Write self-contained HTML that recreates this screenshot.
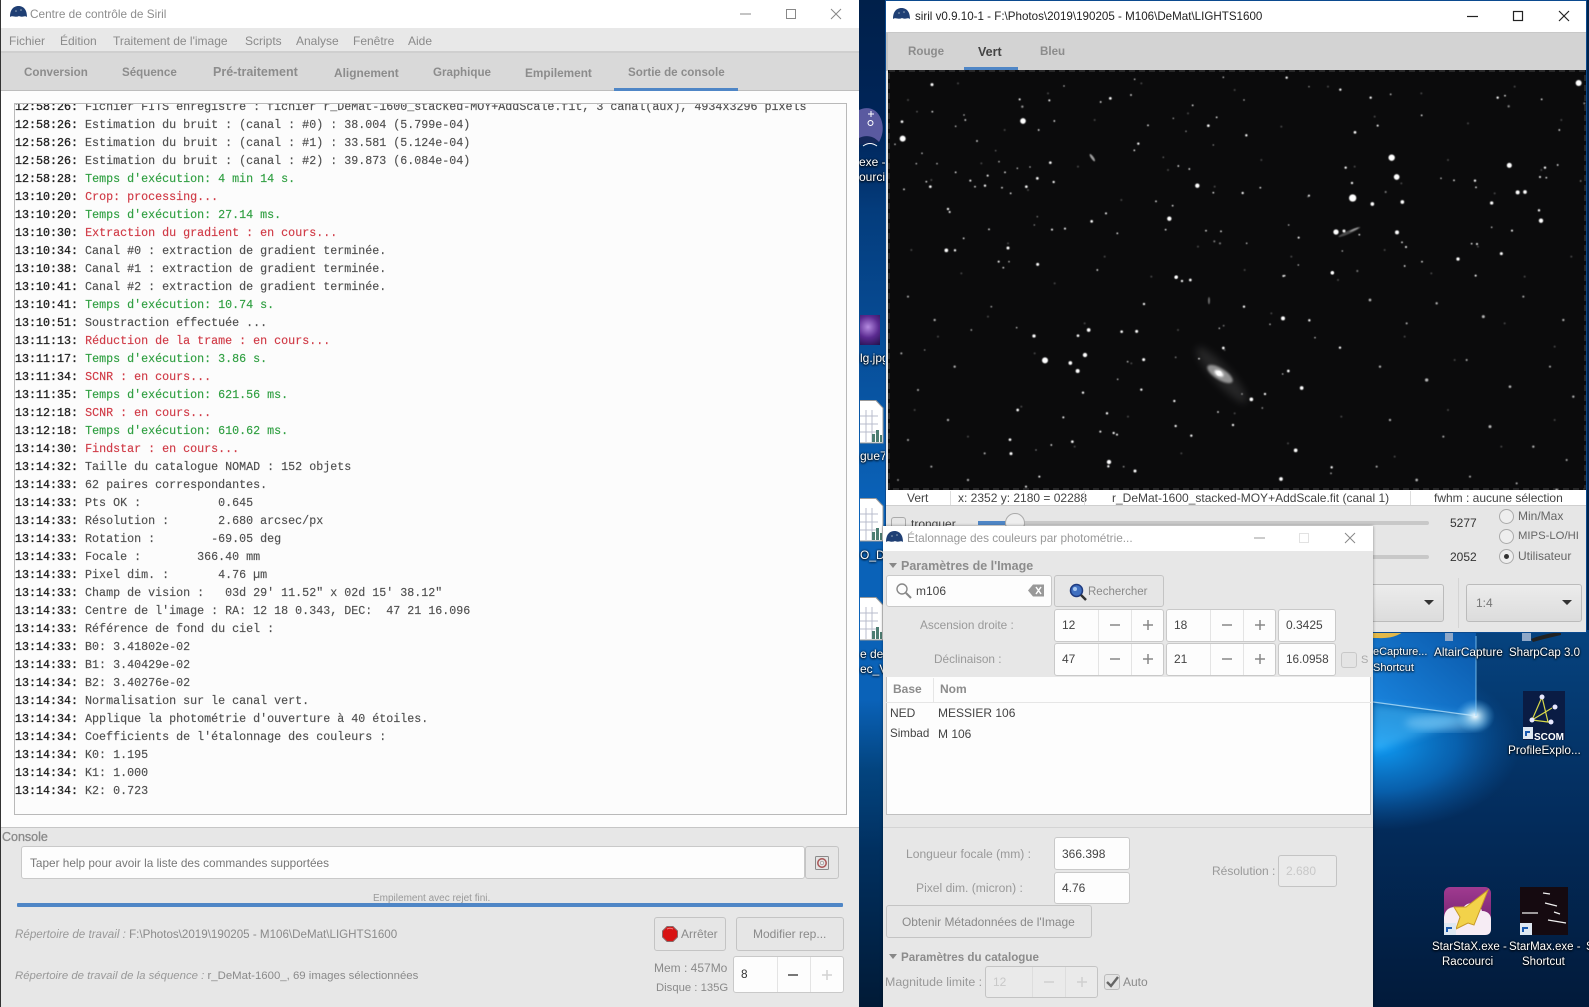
<!DOCTYPE html>
<html lang="fr"><head><meta charset="utf-8"><title>Siril</title>
<style>
html,body{margin:0;padding:0;width:1589px;height:1007px;overflow:hidden;background:#02234a;font-family:"Liberation Sans",sans-serif;font-size:11.8px;color:#8a8a8a}
div,span,svg{position:absolute;box-sizing:border-box}
.t{white-space:nowrap;line-height:16px;height:16px}
.m{font-size:12px}
.b{font-weight:bold;color:#8c8c8c;font-size:11.6px}
.d{color:#fff;text-shadow:0 1px 2px #000,0 0 2px #000;font-size:11.5px;text-align:center}
.entry{background:#fdfdfd;border:1px solid #c9c9c9;border-radius:3px}
.btn{background:#e6e6e6;border:1px solid #c4c4c4;border-radius:3px}
.sep{background:#e4e4e4;width:1px}
#log{left:15px;top:104px;width:830px;height:710px;overflow:hidden;font-family:"Liberation Mono","DejaVu Sans Mono",monospace;font-size:11.68px;color:#4f4f4f}
#log div{left:0;white-space:pre;line-height:18px;height:18px;-webkit-text-stroke:.15px}
#log b{font-weight:normal;color:#222;-webkit-text-stroke:.3px #222}
#log .g{color:#2f9f41}#log .r{color:#d03a46}
</style></head><body>

<!-- desktop strip -->
<div style="left:859px;top:0;width:26px;height:1007px;background:linear-gradient(180deg,#00204a 0,#00255a 130px,#043c7c 210px,#0a62b8 500px,#0a62b8 700px,#03447f 770px,#013060 850px,#011a36 1007px)"></div>
<svg style="left:859px;top:105px" width="26" height="50" viewBox="0 0 26 50"><path d="M0 5C8 1 18 3 22 14C25 22 24 30 20 37C14 32 6 33 0 36Z" fill="#5a5aa0"/><path d="M0 33C6 30 14 30 20 37C14 40 6 38 0 40Z" fill="#14285a"/><path d="M9 9h6M12 6v6M9 18a2.500 2.500 0 1 0 5 0a2.500 2.500 0 1 0-5 0M4 41q7-5 14 0" stroke="#fff" fill="none"/></svg>
<span class="t d" style="left:859px;top:154px;font-size:12px">exe -</span>
<span class="t d" style="left:859px;top:169px;font-size:12px">ourci</span>
<div style="left:860px;top:315px;width:20px;height:30px;background:radial-gradient(circle at 40% 40%,#b48ae0,#5a2a90 50%,#20104a)"></div>
<span class="t d" style="left:860px;top:350px;font-size:12px">lg.jpg</span>
<svg style="left:860px;top:400px" width="24" height="44"><path d="M0 .5H16L23 8V43H0" fill="#fff" stroke="#999"/><path d="M0 16H18M0 24H18M0 32H18M6 10V42M12 10V42" stroke="#b8bccc"/><path d="M12 42V34h3V42M16 42V30h3V42M20 42V35h2V42" fill="#4d7d72"/></svg>
<span class="t d" style="left:860px;top:448px;font-size:12px">gue7</span>
<svg style="left:860px;top:498px" width="24" height="44"><path d="M0 .5H16L23 8V43H0" fill="#fff" stroke="#999"/><path d="M0 16H18M0 24H18M0 32H18M6 10V42M12 10V42" stroke="#b8bccc"/><path d="M12 42V34h3V42M16 42V30h3V42M20 42V35h2V42" fill="#4d7d72"/></svg>
<span class="t d" style="left:860px;top:547px;font-size:12px">O_Dé</span>
<svg style="left:860px;top:597px" width="24" height="44"><path d="M0 .5H16L23 8V43H0" fill="#fff" stroke="#999"/><path d="M0 16H18M0 24H18M0 32H18M6 10V42M12 10V42" stroke="#b8bccc"/><path d="M12 42V34h3V42M16 42V30h3V42M20 42V35h2V42" fill="#4d7d72"/></svg>
<span class="t d" style="left:860px;top:646px;font-size:12px">e de</span>
<span class="t d" style="left:860px;top:661px;font-size:12px">ec_V</span>

<!-- wallpaper right -->
<svg style="left:1373px;top:630px" width="216" height="377" viewBox="1373 630 216 377">
<defs>
<linearGradient id="wb" x1="0" y1="0" x2="0" y2="1"><stop offset="0" stop-color="#06437f"/><stop offset=".5" stop-color="#032c5c"/><stop offset="1" stop-color="#021a3a"/></linearGradient>
<radialGradient id="wg"><stop offset="0" stop-color="#0f9cf5"/><stop offset=".55" stop-color="#0a6fc4" stop-opacity=".75"/><stop offset="1" stop-color="#0a5aa8" stop-opacity="0"/></radialGradient>
<linearGradient id="wp" x1="0" y1="1" x2="1" y2="0"><stop offset="0" stop-color="#1a86e0"/><stop offset="1" stop-color="#0a57a8"/></linearGradient>
<radialGradient id="wf"><stop offset="0" stop-color="#fff"/><stop offset=".3" stop-color="#bfeaff" stop-opacity=".7"/><stop offset="1" stop-color="#4fb4f5" stop-opacity="0"/></radialGradient>
<filter id="wbl"><feGaussianBlur stdDeviation="4"/></filter>
</defs>
<rect x="1373" y="630" width="216" height="377" fill="url(#wb)"/>
<ellipse cx="1380" cy="745" rx="140" ry="85" fill="url(#wg)"/>
<polygon points="1373,630 1476,630 1476,716 1373,702" fill="url(#wp)"/>
<polygon points="1373,704 1476,716 1373,752" fill="#3fb0f2" opacity=".6" filter="url(#wbl)"/>
<ellipse cx="1445" cy="723" rx="40" ry="8" fill="#9adcff" opacity=".45" filter="url(#wbl)"/>
<ellipse cx="1475" cy="716" rx="20" ry="17" fill="url(#wf)"/>
<path d="M1373 702L1476 716" stroke="#c8ecff" stroke-width="1.2" opacity=".7"/>
<path d="M1476 636V716" stroke="#8ed4ff" stroke-width="1.4" opacity=".55"/>
</svg>
<svg style="left:1373px;top:630px" width="210" height="12"><path d="M0 2H30Q20 9 5 8H0Z" fill="#e2b84a"/><rect x="72" y="2" width="8" height="9" fill="#8fa8c8"/><rect x="149" y="2" width="9" height="9" fill="#8fa8c8"/><path d="M158 9Q170 4 188 2V5Q170 9 160 12Z" fill="#222"/></svg>
<span class="t d" style="left:1373px;top:644px;font-size:11px">eCapture...</span>
<span class="t d" style="left:1373px;top:660px;font-size:11px">Shortcut</span>
<span class="t d" style="left:1434px;top:644px;font-size:11.8px">AltairCapture</span>
<span class="t d" style="left:1509px;top:645px">SharpCap 3.0</span>
<svg style="left:1523px;top:691px" width="42" height="49" viewBox="0 0 42 49"><rect width="42" height="49" fill="#0a1c44"/><path d="M19 6L9 29L29 17L9 29L25 31L19 6" fill="none" stroke="#d8d84a" stroke-width="1.2"/><g fill="#e8e8ff"><circle cx="19" cy="6" r="2.5"/><circle cx="9" cy="29" r="2.5"/><circle cx="32" cy="16" r="2.5"/><circle cx="28" cy="31" r="2.5"/></g><rect x="0" y="36" width="10" height="12" fill="#dfe8f2"/><path d="M3 45V41H7" stroke="#1a5ab0" fill="none" stroke-width="2"/></svg>
<span class="t" style="left:1534px;top:730px;color:#fff;font-weight:bold;font-size:10px">SCOM</span>
<span class="t d" style="left:1508px;top:742px;font-size:11.8px">ProfileExplo...</span>
<svg style="left:1444px;top:887px" width="48" height="48" viewBox="0 0 48 48"><defs><linearGradient id="sx" x1="0" y1="0" x2="0" y2="1"><stop offset="0" stop-color="#a03a90"/><stop offset="1" stop-color="#6a1e68"/></linearGradient></defs><rect width="47" height="48" rx="6" fill="url(#sx)"/><path d="M0 32C0 20 10 18 18 22C24 12 36 16 38 24C44 24 47 28 47 32V42Q47 48 41 48H6Q0 48 0 42Z" fill="#f6ecf4"/><path d="M44 3L22 20L10 20L16 30L12 42L24 36L30 38L44 3Z" fill="#f2d24a" stroke="#c89a28"/><rect y="36" width="12" height="12" x="0" fill="#dfe8f2"/><path d="M3 45V41H8" stroke="#1a5ab0" fill="none" stroke-width="2"/></svg>
<span class="t d" style="left:1432px;top:939px">StarStaX.exe -</span>
<span class="t d" style="left:1442px;top:954px">Raccourci</span>
<svg style="left:1520px;top:887px" width="48" height="48" viewBox="0 0 48 48"><rect width="48" height="48" fill="#150a10"/><path d="M2 26H18M25 16L37 19M28 33L46 36M23 6L30 7M34 25L40 27" stroke="#f0f0f0" stroke-width="1.2"/><rect x="0" y="36" width="12" height="12" fill="#dfe8f2"/><path d="M3 45V41H8" stroke="#1a5ab0" fill="none" stroke-width="2"/></svg>
<span class="t d" style="left:1509px;top:939px">StarMax.exe -</span>
<span class="t d" style="left:1522px;top:954px">Shortcut</span>
<span class="t d" style="left:1586px;top:939px">S</span>

<!-- LEFT WINDOW -->
<div style="left:0;top:0;width:859px;height:1007px;background:#e7e7e7;border-left:1px solid #333">
<div style="left:0;top:0;width:858px;height:28px;background:#fff"></div>
<svg style="left:9px;top:6px" width="17" height="13" viewBox="0 0 17 13"><path d="M0 11C0 3 4 0 8.500 0S17 3 17 11C14 9 13 12 9 10C5 12 3 9 0 11Z" fill="#1f3f74"/><circle cx="6" cy="5" r=".8" fill="#9ab"/><circle cx="11" cy="4" r=".8" fill="#9ab"/></svg>
<span class="t" style="left:29px;top:6px;font-size:11.8px;color:#8d8d8d">Centre de contrôle de Siril</span>
<svg style="left:730px;top:6px" width="120" height="16"><path d="M9 8H20" stroke="#888"/><rect x="55.500" y="3.500" width="9" height="9" fill="none" stroke="#888"/><path d="M100 3L110 13M110 3L100 13" stroke="#888"/></svg>
<div style="left:0;top:28px;width:858px;height:25px;background:#e8e8e8;border-bottom:2px solid #cfcfcf"></div>
<span class="t m" style="left:8px;top:33px">Fichier</span>
<span class="t m" style="left:59px;top:33px">Édition</span>
<span class="t m" style="left:112px;top:33px">Traitement de l'image</span>
<span class="t m" style="left:244px;top:33px">Scripts</span>
<span class="t m" style="left:295px;top:33px">Analyse</span>
<span class="t m" style="left:352px;top:33px">Fenêtre</span>
<span class="t m" style="left:407px;top:33px">Aide</span>
<div style="left:0;top:53px;width:858px;height:38px;background:#d9d9d9;border-bottom:1px solid #bdbdbd"></div>
<span class="t b" style="left:23px;top:65px">Conversion</span>
<span class="t b" style="left:121px;top:65px">Séquence</span>
<span class="t b" style="left:212px;top:64px;font-size:12.5px">Pré-traitement</span>
<span class="t b" style="left:333px;top:65px;font-size:11.9px">Alignement</span>
<span class="t b" style="left:432px;top:65px">Graphique</span>
<span class="t b" style="left:524px;top:65px;font-size:11.8px">Empilement</span>
<span class="t b" style="left:627px;top:65px">Sortie de console</span>
<div style="left:613px;top:88px;width:124px;height:3px;background:#4f86c6"></div>
<div style="left:0;top:91px;width:858px;height:737px;background:#fdfdfd;border-bottom:1px solid #c6c6c6"></div>
<div style="left:13px;top:103px;width:833px;height:712px;background:#fcfcfc;border:1px solid #b9b9b9"></div>
</div>
<div id="log">
<div style="top:-6px"><b>12:58:26:</b> Fichier FITS enregistré : fichier r_DeMat-1600_stacked-MOY+AddScale.fit, 3 canal(aux), 4934x3296 pixels</div>
<div style="top:12px"><b>12:58:26:</b> Estimation du bruit : (canal : #0) : 38.004 (5.799e-04)</div>
<div style="top:30px"><b>12:58:26:</b> Estimation du bruit : (canal : #1) : 33.581 (5.124e-04)</div>
<div style="top:48px"><b>12:58:26:</b> Estimation du bruit : (canal : #2) : 39.873 (6.084e-04)</div>
<div style="top:66px"><b>12:58:28:</b> <span class="g" style="position:static">Temps d'exécution: 4 min 14 s.</span></div>
<div style="top:84px"><b>13:10:20:</b> <span class="r" style="position:static">Crop: processing...</span></div>
<div style="top:102px"><b>13:10:20:</b> <span class="g" style="position:static">Temps d'exécution: 27.14 ms.</span></div>
<div style="top:120px"><b>13:10:30:</b> <span class="r" style="position:static">Extraction du gradient : en cours...</span></div>
<div style="top:138px"><b>13:10:34:</b> Canal #0 : extraction de gradient terminée.</div>
<div style="top:156px"><b>13:10:38:</b> Canal #1 : extraction de gradient terminée.</div>
<div style="top:174px"><b>13:10:41:</b> Canal #2 : extraction de gradient terminée.</div>
<div style="top:192px"><b>13:10:41:</b> <span class="g" style="position:static">Temps d'exécution: 10.74 s.</span></div>
<div style="top:210px"><b>13:10:51:</b> Soustraction effectuée ...</div>
<div style="top:228px"><b>13:11:13:</b> <span class="r" style="position:static">Réduction de la trame : en cours...</span></div>
<div style="top:246px"><b>13:11:17:</b> <span class="g" style="position:static">Temps d'exécution: 3.86 s.</span></div>
<div style="top:264px"><b>13:11:34:</b> <span class="r" style="position:static">SCNR : en cours...</span></div>
<div style="top:282px"><b>13:11:35:</b> <span class="g" style="position:static">Temps d'exécution: 621.56 ms.</span></div>
<div style="top:300px"><b>13:12:18:</b> <span class="r" style="position:static">SCNR : en cours...</span></div>
<div style="top:318px"><b>13:12:18:</b> <span class="g" style="position:static">Temps d'exécution: 610.62 ms.</span></div>
<div style="top:336px"><b>13:14:30:</b> <span class="r" style="position:static">Findstar : en cours...</span></div>
<div style="top:354px"><b>13:14:32:</b> Taille du catalogue NOMAD : 152 objets</div>
<div style="top:372px"><b>13:14:33:</b> 62 paires correspondantes.</div>
<div style="top:390px"><b>13:14:33:</b> Pts OK :           0.645</div>
<div style="top:408px"><b>13:14:33:</b> Résolution :       2.680 arcsec/px</div>
<div style="top:426px"><b>13:14:33:</b> Rotation :        -69.05 deg</div>
<div style="top:444px"><b>13:14:33:</b> Focale :        366.40 mm</div>
<div style="top:462px"><b>13:14:33:</b> Pixel dim. :       4.76 µm</div>
<div style="top:480px"><b>13:14:33:</b> Champ de vision :   03d 29' 11.52" x 02d 15' 38.12"</div>
<div style="top:498px"><b>13:14:33:</b> Centre de l'image : RA: 12 18 0.343, DEC:  47 21 16.096</div>
<div style="top:516px"><b>13:14:33:</b> Référence de fond du ciel :</div>
<div style="top:534px"><b>13:14:33:</b> B0: 3.41802e-02</div>
<div style="top:552px"><b>13:14:33:</b> B1: 3.40429e-02</div>
<div style="top:570px"><b>13:14:34:</b> B2: 3.40276e-02</div>
<div style="top:588px"><b>13:14:34:</b> Normalisation sur le canal vert.</div>
<div style="top:606px"><b>13:14:34:</b> Applique la photométrie d'ouverture à 40 étoiles.</div>
<div style="top:624px"><b>13:14:34:</b> Coefficients de l'étalonnage des couleurs :</div>
<div style="top:642px"><b>13:14:34:</b> K0: 1.195</div>
<div style="top:660px"><b>13:14:34:</b> K1: 1.000</div>
<div style="top:678px"><b>13:14:34:</b> K2: 0.723</div>
</div>

<span class="t" style="left:2px;top:829px;font-size:12.5px;color:#8a8a8a;-webkit-text-stroke:.3px #8a8a8a">Console</span>
<div class="entry" style="left:21px;top:846px;width:784px;height:33px"></div>
<span class="t" style="left:30px;top:855px;color:#777">Taper help pour avoir la liste des commandes supportées</span>
<div class="btn" style="left:805px;top:846px;width:34px;height:33px"></div>
<svg style="left:815px;top:856px" width="14" height="14" viewBox="0 0 14 14"><rect x=".5" y=".5" width="13" height="13" rx="1" fill="#e4e4e4" stroke="#8a8a8a"/><circle cx="7" cy="7" r="4.200" fill="none" stroke="#a85555" stroke-width="1.500"/><circle cx="7" cy="7" r="1.800" fill="#eee" stroke="#777" stroke-width=".5"/></svg>
<span class="t" style="left:373px;top:891px;font-size:10px;color:#999">Empilement avec rejet fini.</span>
<div style="left:17px;top:903px;width:826px;height:4px;background:#4f86c6;border-radius:1px"></div>
<span class="t" style="left:15px;top:927px;font-size:11.6px;color:#8a8a8a"><i style="color:#999">Répertoire de travail :</i> F:\Photos\2019\190205 - M106\DeMat\LIGHTS1600</span>
<span class="t" style="left:15px;top:968px;font-size:11.4px;color:#8a8a8a"><i style="color:#999">Répertoire de travail de la séquence :</i> r_DeMat-1600_, 69 images sélectionnées</span>
<div class="btn" style="left:654px;top:917px;width:72px;height:34px"></div>
<svg style="left:662px;top:926px" width="16" height="16" viewBox="0 0 16 16"><path d="M5 .5H11L15.500 5V11L11 15.500H5L.5 11V5Z" fill="#d81414" stroke="#8a6a6a"/><path d="M5 3Q8 1.500 11 3" stroke="#f08080" fill="none"/></svg>
<span class="t m" style="left:681px;top:926px">Arrêter</span>
<div class="btn" style="left:736px;top:917px;width:108px;height:34px"></div>
<span class="t m" style="left:753px;top:926px">Modifier rep...</span>
<span class="t m" style="left:654px;top:960px">Mem : 457Mo</span>
<span class="t" style="left:656px;top:980px;font-size:11.3px">Disque : 135G</span>
<div class="entry" style="left:733px;top:956px;width:111px;height:37px"></div>
<div class="sep" style="left:777px;top:957px;height:35px"></div>
<div class="sep" style="left:810px;top:957px;height:35px"></div>
<span class="t" style="left:741px;top:966px;color:#333">8</span>
<svg style="left:780px;top:968px" width="60" height="14"><path d="M8 7H18" stroke="#777" stroke-width="2"/><path d="M42 7H52M47 2V12" stroke="#d2d2d2" stroke-width="1.500"/></svg>

<!-- RIGHT WINDOW -->
<div style="left:885px;top:0;width:702px;height:633px;background:#e6e6e6;border:1px solid #0b4a8f">
<div style="left:0;top:0;width:700px;height:32px;background:#fff;border-bottom:1px solid #c8c8c8"></div>
<div style="left:2px;top:32px;width:698px;height:38px;background:#d3d3d3"></div>
<div style="left:0;top:32px;width:2px;height:38px;background:#c2c2c2"></div>
</div>
<svg style="left:893px;top:8px" width="17" height="13" viewBox="0 0 17 13"><path d="M0 11C0 3 4 0 8.500 0S17 3 17 11C14 9 13 12 9 10C5 12 3 9 0 11Z" fill="#1f3f74"/><circle cx="6" cy="5" r=".8" fill="#9ab"/><circle cx="11" cy="4" r=".8" fill="#9ab"/></svg>
<span class="t" style="left:915px;top:9px;font-size:11.6px;color:#222">siril v0.9.10-1 - F:\Photos\2019\190205 - M106\DeMat\LIGHTS1600</span>
<svg style="left:1460px;top:8px" width="120" height="16"><path d="M7 8.500H18" stroke="#222" stroke-width="1.200"/><rect x="53.500" y="3.500" width="9" height="9" fill="none" stroke="#222" stroke-width="1.200"/><path d="M99 3L109 13M109 3L99 13" stroke="#222" stroke-width="1.200"/></svg>
<span class="t b" style="left:908px;top:44px">Rouge</span>
<span class="t b" style="left:978px;top:44px;color:#444;font-size:12.5px">Vert</span>
<span class="t b" style="left:1040px;top:44px">Bleu</span>
<div style="left:964px;top:67px;width:54px;height:3px;background:#4f86c6"></div>

<!-- image -->
<svg style="left:888px;top:70px" width="698" height="420" viewBox="888 70 698 420">
<defs><filter id="bl" x="-5%" y="-5%" width="110%" height="110%"><feGaussianBlur stdDeviation="1.700"/></filter>
<filter id="bl2" x="-60%" y="-60%" width="220%" height="220%"><feGaussianBlur stdDeviation="3.500"/></filter>
<filter id="bl3" x="-80%" y="-80%" width="260%" height="260%"><feGaussianBlur stdDeviation="12"/></filter></defs>
<rect x="888" y="70" width="698" height="420" fill="#0b0b0c"/>
<g transform="translate(888,70) scale(.33333)" fill="#fff" filter="url(#bl)" opacity=".25">
<circle cx="60" cy="90" r="3"/><circle cx="210" cy="40" r="3"/><circle cx="350" cy="180" r="3"/><circle cx="480" cy="70" r="3"/><circle cx="620" cy="150" r="3"/><circle cx="760" cy="40" r="3"/><circle cx="900" cy="130" r="3"/><circle cx="1040" cy="60" r="3"/><circle cx="1180" cy="170" r="3"/><circle cx="1320" cy="50" r="3"/><circle cx="1460" cy="140" r="3"/><circle cx="1600" cy="70" r="3"/><circle cx="1740" cy="160" r="3"/><circle cx="1880" cy="50" r="3"/><circle cx="2020" cy="150" r="3"/>
<circle cx="130" cy="330" r="3"/><circle cx="280" cy="280" r="3"/><circle cx="420" cy="360" r="3"/><circle cx="570" cy="290" r="3"/><circle cx="700" cy="390" r="3"/><circle cx="840" cy="300" r="3"/><circle cx="980" cy="350" r="3"/><circle cx="1120" cy="270" r="3"/><circle cx="1260" cy="380" r="3"/><circle cx="1400" cy="290" r="3"/><circle cx="1540" cy="340" r="3"/><circle cx="1680" cy="270" r="3"/><circle cx="1820" cy="370" r="3"/><circle cx="1960" cy="300" r="3"/>
<circle cx="70" cy="540" r="3"/><circle cx="220" cy="610" r="3"/><circle cx="360" cy="520" r="3"/><circle cx="500" cy="640" r="3"/><circle cx="650" cy="560" r="3"/><circle cx="790" cy="620" r="3"/><circle cx="930" cy="530" r="3"/><circle cx="1070" cy="600" r="3"/><circle cx="1210" cy="560" r="3"/><circle cx="1350" cy="630" r="3"/><circle cx="1490" cy="540" r="3"/><circle cx="1630" cy="610" r="3"/><circle cx="1770" cy="530" r="3"/><circle cx="1910" cy="620" r="3"/><circle cx="2050" cy="560" r="3"/>
<circle cx="150" cy="800" r="3"/><circle cx="300" cy="740" r="3"/><circle cx="440" cy="850" r="3"/><circle cx="590" cy="760" r="3"/><circle cx="730" cy="880" r="3"/><circle cx="870" cy="780" r="3"/><circle cx="1010" cy="840" r="3"/><circle cx="1150" cy="730" r="3"/><circle cx="1550" cy="800" r="3"/><circle cx="1700" cy="870" r="3"/><circle cx="1850" cy="760" r="3"/><circle cx="2000" cy="830" r="3"/>
<circle cx="80" cy="1020" r="3"/><circle cx="240" cy="1100" r="3"/><circle cx="400" cy="1010" r="3"/><circle cx="560" cy="1130" r="3"/><circle cx="720" cy="1040" r="3"/><circle cx="880" cy="1150" r="3"/><circle cx="1040" cy="1030" r="3"/><circle cx="1200" cy="1120" r="3"/><circle cx="1360" cy="1040" r="3"/><circle cx="1520" cy="1160" r="3"/><circle cx="1680" cy="1020" r="3"/><circle cx="1840" cy="1130" r="3"/><circle cx="2000" cy="1050" r="3"/>
</g>
<g transform="translate(880,60) scale(.33333)" fill="#fff" filter="url(#bl)">
<circle cx="68" cy="236" r="9"/><circle cx="429" cy="183" r="8.500"/><circle cx="156" cy="74" r="4.500"/><circle cx="66" cy="185" r="4"/><circle cx="952" cy="377" r="6.500"/><circle cx="868" cy="476" r="6.500"/><circle cx="199" cy="571" r="5.500"/><circle cx="384" cy="564" r="4.500"/><circle cx="473" cy="613" r="4.500"/><circle cx="888" cy="652" r="4.500"/><circle cx="691" cy="115" r="4"/><circle cx="511" cy="308" r="4"/><circle cx="472" cy="355" r="4"/><circle cx="521" cy="366" r="3.500"/><circle cx="439" cy="380" r="4"/><circle cx="315" cy="377" r="3.500"/><circle cx="151" cy="380" r="4"/><circle cx="271" cy="362" r="3"/><circle cx="323" cy="347" r="3"/><circle cx="204" cy="447" r="3.500"/><circle cx="209" cy="456" r="3"/><circle cx="225" cy="571" r="3.500"/><circle cx="635" cy="484" r="4"/><circle cx="678" cy="460" r="3"/><circle cx="516" cy="509" r="3"/><circle cx="555" cy="506" r="3"/><circle cx="775" cy="251" r="3.500"/><circle cx="763" cy="271" r="2.500"/><circle cx="985" cy="197" r="4"/><circle cx="1010" cy="172" r="2.500"/><circle cx="938" cy="136" r="2.500"/><circle cx="804" cy="196" r="2.500"/><circle cx="419" cy="118" r="3"/><circle cx="508" cy="121" r="3"/><circle cx="427" cy="140" r="3.500" opacity=".6"/><circle cx="523" cy="183" r="2.500"/><circle cx="476" cy="210" r="2.500"/><circle cx="291" cy="243" r="2.500"/><circle cx="256" cy="180" r="2.500"/><circle cx="227" cy="199" r="2"/><circle cx="227" cy="337" r="2.500"/><circle cx="375" cy="337" r="2.500"/><circle cx="285" cy="380" r="2.500"/><circle cx="366" cy="383" r="2.500"/><circle cx="392" cy="400" r="2.500"/><circle cx="412" cy="325" r="2"/><circle cx="450" cy="321" r="2"/><circle cx="139" cy="365" r="2.500"/><circle cx="72" cy="388" r="2.500"/><circle cx="126" cy="280" r="2"/><circle cx="45" cy="253" r="2"/><circle cx="171" cy="311" r="2"/><circle cx="109" cy="311" r="2"/><circle cx="251" cy="535" r="2.500"/><circle cx="327" cy="508" r="2.500"/><circle cx="356" cy="605" r="3"/><circle cx="370" cy="623" r="2.500"/><circle cx="387" cy="605" r="2"/><circle cx="652" cy="630" r="2.500"/><circle cx="857" cy="509" r="2.500"/><circle cx="878" cy="437" r="2.500"/><circle cx="828" cy="424" r="2.500"/><circle cx="895" cy="318" r="2.500"/><circle cx="928" cy="327" r="2.500"/><circle cx="1000" cy="398" r="2.500"/><circle cx="1003" cy="544" r="3" opacity=".5"/><circle cx="1020" cy="550" r="3" opacity=".5"/><circle cx="978" cy="512" r="2.500"/><circle cx="1023" cy="514" r="2.500"/><circle cx="662" cy="126" r="2.500"/><circle cx="552" cy="78" r="2"/><circle cx="753" cy="105" r="2.500"/><circle cx="764" cy="58" r="2"/><circle cx="1030" cy="52" r="2"/><circle cx="157" cy="155" r="2.500"/><circle cx="252" cy="165" r="2"/><circle cx="111" cy="155" r="2" opacity=".5"/><circle cx="347" cy="272" r="2" opacity=".5"/><circle cx="357" cy="305" r="2"/><circle cx="463" cy="495" r="2" opacity=".7"/><circle cx="472" cy="470" r="2" opacity=".6"/><circle cx="712" cy="520" r="2.500"/><circle cx="880" cy="175" r="1.800"/><circle cx="918" cy="214" r="2" opacity=".7"/><circle cx="1000" cy="255" r="2" opacity=".7"/><circle cx="850" cy="292" r="2" opacity=".5"/>
<ellipse cx="637" cy="293" rx="13" ry="4" transform="rotate(55 637 293)" opacity=".6"/>
</g>
<g transform="translate(1000,270) scale(.33333)" fill="#fff" filter="url(#bl)">
<circle cx="135" cy="271" r="9"/><circle cx="255" cy="255" r="6.500"/><circle cx="233" cy="303" r="6"/><circle cx="211" cy="279" r="5.500"/><circle cx="266" cy="180" r="5.500"/><circle cx="102" cy="198" r="5"/><circle cx="234" cy="197" r="4"/><circle cx="365" cy="185" r="4"/><circle cx="410" cy="184" r="4.500"/><circle cx="431" cy="269" r="4.500"/><circle cx="432" cy="102" r="3.500"/><circle cx="529" cy="21" r="4.500"/><circle cx="571" cy="30" r="4"/><circle cx="546" cy="33" r="3.500"/><circle cx="424" cy="359" r="3.500"/><circle cx="249" cy="368" r="3.500"/><circle cx="53" cy="420" r="4"/><circle cx="30" cy="509" r="4"/><circle cx="33" cy="551" r="4.500"/><circle cx="190" cy="442" r="3"/><circle cx="217" cy="515" r="4"/><circle cx="154" cy="525" r="2.500"/><circle cx="321" cy="430" r="3.500"/><circle cx="301" cy="485" r="3"/><circle cx="341" cy="489" r="3.500"/><circle cx="351" cy="494" r="3"/><circle cx="327" cy="576" r="6.500"/><circle cx="325" cy="589" r="3.500"/><circle cx="405" cy="603" r="4.500"/><circle cx="118" cy="620" r="3"/><circle cx="78" cy="650" r="3"/><circle cx="670" cy="234" r="4"/><circle cx="732" cy="110" r="3.500"/><circle cx="849" cy="145" r="6"/><circle cx="928" cy="151" r="3.500"/><circle cx="997" cy="9" r="4.500"/><circle cx="1020" cy="233" r="3.500"/><circle cx="865" cy="303" r="4"/><circle cx="905" cy="354" r="5.500"/><circle cx="754" cy="388" r="5.500"/><circle cx="795" cy="372" r="3.500"/><circle cx="523" cy="393" r="3.500"/><circle cx="527" cy="468" r="3.500"/><circle cx="574" cy="497" r="3.500"/><circle cx="699" cy="465" r="3.500"/><circle cx="654" cy="426" r="2.500"/><circle cx="887" cy="541" r="5.500"/><circle cx="843" cy="627" r="5.500"/><circle cx="995" cy="592" r="3.500"/><circle cx="597" cy="266" r="2.500"/><circle cx="854" cy="17" r="2.500"/><circle cx="810" cy="163" r="2"/><circle cx="945" cy="203" r="2"/><circle cx="50" cy="173" r="2"/><circle cx="108" cy="540" r="2" opacity=".7"/><circle cx="383" cy="275" r="2.500" opacity=".8"/><circle cx="527" cy="262" r="2.500" opacity=".5"/><circle cx="787" cy="414" r="2.500" opacity=".6"/><circle cx="726" cy="372" r="2.500" opacity=".6"/><circle cx="353" cy="328" r="2"/><circle cx="371" cy="590" r="2.500" opacity=".6"/><circle cx="658" cy="175" r="2"/><circle cx="671" cy="167" r="2.500" opacity=".5"/><circle cx="848" cy="312" r="2"/><circle cx="993" cy="610" r="2.500" opacity=".7"/>
<ellipse cx="627" cy="92" rx="3" ry="11" opacity=".4"/>
</g>
<g transform="translate(1000,270) scale(.33333)" fill="#fff">
<ellipse cx="665" cy="315" rx="110" ry="26" transform="rotate(48 665 315)" opacity=".11" filter="url(#bl3)"/>
<ellipse cx="660" cy="312" rx="44" ry="17" transform="rotate(32 660 312)" opacity=".5" filter="url(#bl2)"/>
<ellipse cx="657" cy="310" rx="15" ry="8" transform="rotate(30 657 310)" filter="url(#bl2)"/>
<circle cx="657" cy="310" r="7" filter="url(#bl)"/>
</g>
<g transform="translate(1240,60) scale(.33333)" fill="#fff" filter="url(#bl)">
<circle cx="1016" cy="69" r="9"/><circle cx="455" cy="293" r="9.500"/><circle cx="470" cy="351" r="8.500"/><circle cx="338" cy="414" r="11"/><circle cx="808" cy="316" r="7.500"/><circle cx="833" cy="397" r="6"/><circle cx="855" cy="396" r="5.500"/><circle cx="903" cy="482" r="6.500"/><circle cx="471" cy="517" r="6"/><circle cx="288" cy="516" r="8"/><circle cx="312" cy="513" r="4.500"/><circle cx="397" cy="432" r="5.500"/><circle cx="487" cy="426" r="5.500"/><circle cx="755" cy="429" r="5"/><circle cx="654" cy="597" r="5"/><circle cx="784" cy="581" r="4.500"/><circle cx="277" cy="638" r="4.500"/><circle cx="345" cy="217" r="4"/><circle cx="317" cy="323" r="3.500"/><circle cx="336" cy="369" r="3.500"/><circle cx="301" cy="89" r="3.500"/><circle cx="392" cy="113" r="3.500"/><circle cx="140" cy="53" r="3.500"/><circle cx="19" cy="226" r="3.500"/><circle cx="8" cy="399" r="3.500"/><circle cx="207" cy="407" r="3"/><circle cx="61" cy="383" r="2.500"/><circle cx="176" cy="533" r="3"/><circle cx="358" cy="524" r="2.500"/><circle cx="486" cy="547" r="2.500"/><circle cx="498" cy="561" r="3"/><circle cx="897" cy="451" r="3.500"/><circle cx="915" cy="323" r="3.500"/><circle cx="900" cy="351" r="3"/><circle cx="919" cy="353" r="2.500"/><circle cx="705" cy="362" r="3.500"/><circle cx="708" cy="382" r="2.500"/><circle cx="816" cy="512" r="3"/><circle cx="711" cy="552" r="3"/><circle cx="695" cy="551" r="2.500"/><circle cx="773" cy="113" r="3.500"/><circle cx="795" cy="107" r="2.500"/><circle cx="806" cy="139" r="3.500" opacity=".5"/><circle cx="905" cy="118" r="2.500"/><circle cx="958" cy="210" r="2.500"/><circle cx="953" cy="315" r="2.500"/><circle cx="545" cy="166" r="2.500"/><circle cx="413" cy="197" r="3"/><circle cx="437" cy="396" r="3" opacity=".5"/><circle cx="642" cy="361" r="2.500"/><circle cx="603" cy="355" r="2"/><circle cx="707" cy="647" r="3"/><circle cx="494" cy="618" r="2.500"/><circle cx="546" cy="605" r="2.500"/><circle cx="130" cy="648" r="3"/><circle cx="146" cy="495" r="2"/><circle cx="20" cy="550" r="2"/><circle cx="12" cy="120" r="2"/><circle cx="207" cy="80" r="2" opacity=".7"/><circle cx="452" cy="103" r="2.500" opacity=".8"/><circle cx="1022" cy="363" r="2.500" opacity=".5"/><circle cx="1033" cy="130" r="3" opacity=".6"/><circle cx="755" cy="502" r="2"/><circle cx="307" cy="573" r="2"/><circle cx="175" cy="615" r="2"/><circle cx="352" cy="633" r="3" opacity=".5"/>
<ellipse cx="328" cy="516" rx="36" ry="5" transform="rotate(-24 328 516)" opacity=".25"/>
<ellipse cx="342" cy="509" rx="15" ry="2.500" transform="rotate(-24 342 509)" opacity=".45"/>
</g>
<g fill="#fff" filter="url(#bl)" transform="translate(888,280) scale(.33333)" opacity=".7">
<circle cx="60" cy="50" r="3"/><circle cx="140" cy="120" r="3.500"/><circle cx="40" cy="220" r="3"/><circle cx="200" cy="260" r="3.500"/><circle cx="90" cy="330" r="3"/><circle cx="250" cy="150" r="2.500"/><circle cx="180" cy="420" r="3.500"/><circle cx="60" cy="480" r="3"/><circle cx="290" cy="520" r="3"/><circle cx="130" cy="560" r="3"/><circle cx="240" cy="600" r="3.500"/><circle cx="30" cy="600" r="2.500"/><circle cx="310" cy="80" r="2.500"/><circle cx="110" cy="210" r="2"/>
</g>
<g fill="#fff" filter="url(#bl)" transform="translate(1350,280) scale(.33333)" opacity=".7">
<circle cx="60" cy="60" r="4"/><circle cx="170" cy="130" r="3"/><circle cx="260" cy="70" r="3.500"/><circle cx="400" cy="110" r="4.500"/><circle cx="520" cy="50" r="3"/><circle cx="640" cy="120" r="3.500"/><circle cx="90" cy="260" r="3.500"/><circle cx="230" cy="300" r="5"/><circle cx="350" cy="240" r="3"/><circle cx="480" cy="320" r="4"/><circle cx="600" cy="260" r="3"/><circle cx="670" cy="350" r="3.500"/><circle cx="120" cy="420" r="3.500"/><circle cx="280" cy="470" r="3"/><circle cx="420" cy="440" r="4.500"/><circle cx="550" cy="500" r="3.500"/><circle cx="650" cy="540" r="3"/><circle cx="80" cy="560" r="3"/><circle cx="200" cy="600" r="4"/><circle cx="360" cy="590" r="3"/><circle cx="500" cy="610" r="3"/><circle cx="620" cy="630" r="4"/>
</g>
<rect x="889" y="71" width="696" height="418" fill="none" stroke="#888" stroke-dasharray="6 4" opacity=".45"/>
</svg>

<!-- status bar -->
<div style="left:886px;top:490px;width:700px;height:16px;background:#fff;border-bottom:1px solid #cfcfcf"></div>
<span class="t" style="left:907px;top:490px;color:#444;font-size:12px">Vert</span>
<div style="left:950px;top:491px;width:1px;height:14px;background:#ddd"></div>
<span class="t m" style="left:958px;top:490px;color:#444">x: 2352 y: 2180 = 02288</span>
<div style="left:1084px;top:491px;width:1px;height:14px;background:#ddd"></div>
<span class="t m" style="left:1112px;top:490px;color:#444">r_DeMat-1600_stacked-MOY+AddScale.fit (canal 1)</span>
<div style="left:1410px;top:491px;width:1px;height:14px;background:#ddd"></div>
<span class="t m" style="left:1434px;top:490px;color:#444">fwhm : aucune sélection</span>
<!-- lower panel -->
<div style="left:891px;top:517px;width:15px;height:15px;background:#e6e6e6;border:1px solid #aaa;border-radius:3px"></div>
<span class="t m" style="left:911px;top:516px;color:#444">tronquer</span>
<div style="left:978px;top:521px;width:451px;height:4px;background:#c8c8c8;border-radius:2px"></div>
<div style="left:978px;top:521px;width:30px;height:4px;background:#4f86c6"></div>
<div style="left:1005px;top:513px;width:20px;height:20px;background:#eee;border:1px solid #aaa;border-radius:50%"></div>
<div style="left:1370px;top:555px;width:59px;height:4px;background:#c8c8c8;border-radius:2px"></div>
<span class="t m" style="left:1450px;top:515px;color:#333">5277</span>
<span class="t m" style="left:1450px;top:549px;color:#333">2052</span>
<div style="left:1499px;top:509px;width:15px;height:15px;background:#eee;border:1px solid #aaa;border-radius:50%"></div>
<div style="left:1499px;top:528.500px;width:15px;height:15px;background:#eee;border:1px solid #aaa;border-radius:50%"></div>
<div style="left:1499px;top:548.500px;width:15px;height:15px;background:#eee;border:1px solid #aaa;border-radius:50%"></div>
<div style="left:1504px;top:553.500px;width:5px;height:5px;background:#333;border-radius:50%"></div>
<span class="t m" style="left:1518px;top:508px;color:#666">Min/Max</span>
<span class="t" style="left:1518px;top:528px;color:#666;font-size:11.3px">MIPS-LO/HI</span>
<span class="t m" style="left:1518px;top:548px;color:#666">Utilisateur</span>
<div style="left:1360px;top:584px;width:84px;height:38px;border:1px solid #bbb;border-radius:3px;background:linear-gradient(#ececec,#dcdcdc)"></div>
<div style="left:1458px;top:578px;width:1px;height:50px;background:#d4d4d4"></div>
<div style="left:1466px;top:584px;width:116px;height:38px;border:1px solid #bbb;border-radius:3px;background:linear-gradient(#ececec,#dcdcdc)"></div>
<span class="t m" style="left:1476px;top:595px;color:#777">1:4</span>
<svg style="left:1424px;top:600px" width="150" height="7"><path d="M0 0H10L5 5Z M138 0H148L143 5Z" fill="#333"/></svg>

<!-- DIALOG -->
<div style="left:883px;top:526px;width:490px;height:481px;background:#e7e7e7;box-shadow:0 0 3px rgba(0,0,0,.4)">
<div style="left:0;top:0;width:490px;height:25px;background:#fff"></div>
</div>
<svg style="left:886px;top:531px" width="17" height="13" viewBox="0 0 17 13"><path d="M0 11C0 3 4 0 8.500 0S17 3 17 11C14 9 13 12 9 10C5 12 3 9 0 11Z" fill="#1f3f74"/><circle cx="6" cy="5" r=".8" fill="#9ab"/><circle cx="11" cy="4" r=".8" fill="#9ab"/></svg>
<span class="t" style="left:907px;top:530px;color:#999">Étalonnage des couleurs par photométrie...</span>
<svg style="left:1250px;top:530px" width="112" height="16"><path d="M4 8H15" stroke="#999"/><rect x="49.500" y="3.500" width="9" height="9" fill="none" stroke="#e2e2e2"/><path d="M95 3L105 13M105 3L95 13" stroke="#888"/></svg>
<svg style="left:889px;top:563px" width="9" height="6"><path d="M0 0H8L4 5Z" fill="#888"/></svg>
<span class="t b" style="left:901px;top:558px;font-size:12.5px">Paramètres de l'Image</span>
<div class="entry" style="left:886px;top:575px;width:166px;height:32px"></div>
<svg style="left:895px;top:582px" width="18" height="18"><circle cx="7" cy="7" r="5" fill="none" stroke="#888" stroke-width="1.400"/><path d="M11 11L16 16" stroke="#888" stroke-width="2"/></svg>
<span class="t m" style="left:916px;top:583px;color:#444">m106</span>
<svg style="left:1028px;top:584px" width="17" height="13"><path d="M5 .5H16V12.500H5L0 6.500Z" fill="#999"/><path d="M8 3L13 10M13 3L8 10" stroke="#fff" stroke-width="1.500"/></svg>
<div class="btn" style="left:1054px;top:575px;width:110px;height:32px"></div>
<svg style="left:1069px;top:583px" width="18" height="18"><circle cx="7.500" cy="7.500" r="6" fill="#3f6fc0" stroke="#1e3a80" stroke-width="1.500"/><circle cx="6" cy="6" r="2" fill="#a8c8f0"/><path d="M12 12L17 17" stroke="#333" stroke-width="2.500"/></svg>
<span class="t" style="left:1088px;top:584px;font-size:11.5px">Rechercher</span>
<span class="t" style="left:920px;top:617px;color:#999">Ascension droite :</span>
<span class="t" style="left:934px;top:651px;color:#999">Déclinaison :</span>
<div class="entry" style="left:1054px;top:609px;width:110px;height:33px"></div><div class="sep" style="left:1098px;top:610px;height:31px"></div><div class="sep" style="left:1131px;top:610px;height:31px"></div>
<div class="entry" style="left:1166px;top:609px;width:110px;height:33px"></div><div class="sep" style="left:1210px;top:610px;height:31px"></div><div class="sep" style="left:1243px;top:610px;height:31px"></div>
<div class="entry" style="left:1278px;top:609px;width:58px;height:33px"></div>
<div class="entry" style="left:1054px;top:643px;width:110px;height:33px"></div><div class="sep" style="left:1098px;top:644px;height:31px"></div><div class="sep" style="left:1131px;top:644px;height:31px"></div>
<div class="entry" style="left:1166px;top:643px;width:110px;height:33px"></div><div class="sep" style="left:1210px;top:644px;height:31px"></div><div class="sep" style="left:1243px;top:644px;height:31px"></div>
<div class="entry" style="left:1278px;top:643px;width:58px;height:33px"></div>
<span class="t m" style="left:1062px;top:617px;color:#444">12</span><span class="t m" style="left:1174px;top:617px;color:#444">18</span><span class="t m" style="left:1286px;top:617px;color:#444">0.3425</span>
<span class="t m" style="left:1062px;top:651px;color:#444">47</span><span class="t m" style="left:1174px;top:651px;color:#444">21</span><span class="t" style="left:1286px;top:651px;color:#444">16.0958</span>
<svg style="left:1101px;top:619px" width="170" height="50"><path d="M9 6H19M42 6H52M47 1V11M121 6H131M154 6H164M159 1V11M9 40H19M42 40H52M47 35V45M121 40H131M154 40H164M159 35V45" stroke="#888" stroke-width="1.500"/></svg>
<div style="left:1341px;top:652px;width:16px;height:16px;border:1px solid #c8c8c8;border-radius:3px;background:#e4e4e4"></div>
<span class="t" style="left:1361px;top:652px;color:#aaa;font-size:11px">S</span>
<div style="left:886px;top:677px;width:485px;height:138px;background:#fdfdfd;border:1px solid #c0c0c0;border-top:none"></div>
<div style="left:886px;top:702px;width:485px;height:1px;background:#e6e6e6"></div>
<div style="left:933px;top:678px;width:1px;height:24px;background:#e6e6e6"></div>
<span class="t b" style="left:893px;top:681px;font-size:12px">Base</span>
<span class="t b" style="left:940px;top:681px;font-size:12px">Nom</span>
<span class="t m" style="left:890px;top:705px;color:#444">NED</span>
<span class="t m" style="left:938px;top:705px;color:#444">MESSIER 106</span>
<span class="t" style="left:890px;top:726px;color:#444;font-size:11.6px">Simbad</span>
<span class="t m" style="left:938px;top:726px;color:#444">M 106</span>
<div style="left:883px;top:827px;width:490px;height:1px;background:#d4d4d4"></div>
<span class="t" style="left:906px;top:846px;color:#999;font-size:12.1px">Longueur focale (mm) :</span>
<span class="t" style="left:916px;top:880px;color:#999;font-size:12.1px">Pixel dim. (micron) :</span>
<div class="entry" style="left:1054px;top:837px;width:76px;height:33px"></div>
<div class="entry" style="left:1054px;top:872px;width:76px;height:32px"></div>
<span class="t m" style="left:1062px;top:846px;color:#444">366.398</span>
<span class="t m" style="left:1062px;top:880px;color:#444">4.76</span>
<span class="t m" style="left:1212px;top:863px;color:#999">Résolution :</span>
<div class="btn" style="left:1278px;top:855px;width:59px;height:32px;background:#eaeaea"></div>
<span class="t m" style="left:1286px;top:863px;color:#c8c8c8">2.680</span>
<div class="btn" style="left:886px;top:905px;width:206px;height:33px"></div>
<span class="t" style="left:902px;top:914px;color:#8a8a8a;font-size:11.95px">Obtenir Métadonnées de l'Image</span>
<svg style="left:889px;top:954px" width="9" height="6"><path d="M0 0H8L4 5Z" fill="#888"/></svg>
<span class="t b" style="left:901px;top:950px">Paramètres du catalogue</span>
<span class="t" style="left:885px;top:974px;color:#999;font-size:12.4px">Magnitude limite :</span>
<div class="btn" style="left:985px;top:966px;width:113px;height:32px;background:#eaeaea"></div>
<div style="left:1032px;top:967px;width:1px;height:30px;background:#ddd"></div><div style="left:1065px;top:967px;width:1px;height:30px;background:#ddd"></div>
<span class="t m" style="left:993px;top:974px;color:#c8c8c8">12</span>
<svg style="left:1040px;top:976px" width="50" height="12"><path d="M4 6H14M37 6H47M42 1V11" stroke="#cfcfcf" stroke-width="1.500"/></svg>
<div style="left:1104px;top:974px;width:16px;height:16px;border:1px solid #bbb;border-radius:3px;background:#e4e4e4"></div>
<svg style="left:1105px;top:975px" width="15" height="14"><path d="M2 7L6 11L13 2" stroke="#666" stroke-width="2.400" fill="none"/></svg>
<span class="t m" style="left:1123px;top:974px;color:#8a8a8a">Auto</span>
</body></html>
